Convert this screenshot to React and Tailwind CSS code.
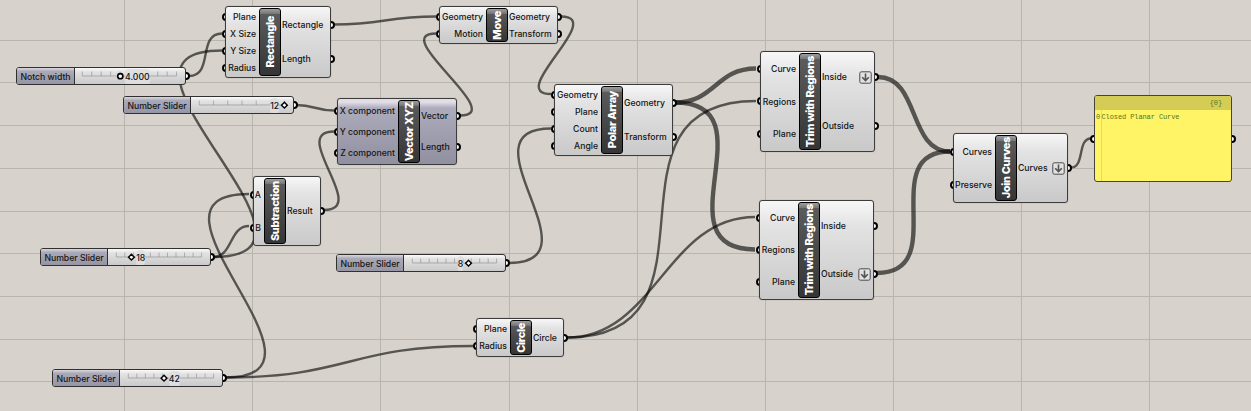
import React from "react";

const wires = [
  { from: [334, 24.5], to: [436, 16.5], d: 51 },
  { from: [460, 115.5], to: [436, 33.5], d: 49 },
  { from: [561, 16.5], to: [551, 94], d: 46 },
  { from: [296, 105], to: [334, 110.5], d: 19 },
  { from: [189, 76], to: [222, 33.5], d: 25 },
  { from: [213, 257], to: [222, 50.5], d: 144 },
  { from: [213, 257], to: [249, 226], d: 20 },
  { from: [225, 377.5], to: [249, 194], d: 128 },
  { from: [225, 377.5], to: [473, 346], d: 124 },
  { from: [509, 263], to: [551, 128.5], d: 93 },
  { from: [324, 210], to: [334, 131.5], d: 46 },
  { from: [567, 337.5], to: [756, 101], d: 169 },
  { from: [567, 337.5], to: [755, 217], d: 88 },
  { from: [675, 102.5], to: [756, 68.5], d: 40, thick: true },
  { from: [675, 102.5], to: [755, 249.5], d: 98, thick: true },
  { from: [878, 77], to: [950, 151.5], d: 42, thick: true },
  { from: [877, 273], to: [950, 151.5], d: 75, thick: true },
  { from: [1071, 167.5], to: [1091, 138.5], d: 14 },
];

const nodes = [
  { title: "Rectangle", x: 225, y: 6, w: 106, h: 72, left: 34, inputs: ["Plane", "X Size", "Y Size", "Radius"], outputs: ["Rectangle", "Length"] },
  { title: "Move", x: 439, y: 6, w: 119, h: 38, left: 47, inputs: ["Geometry", "Motion"], outputs: ["Geometry", "Transform"] },
  { title: "Vector XYZ", x: 337, y: 98, w: 120, h: 67, left: 61, inputs: ["X component", "Y component", "Z component"], outputs: ["Vector", "Length"], purple: true },
  { title: "Polar Array", x: 554, y: 84, w: 119, h: 72, left: 47, inputs: ["Geometry", "Plane", "Count", "Angle"], outputs: ["Geometry", "Transform"] },
  { title: "Trim with Regions", x: 760, y: 51, w: 115, h: 101, left: 39, inputs: ["Curve", "Regions", "Plane"], outputs: ["Inside", "Outside"], flatten: 0 },
  { title: "Trim with Regions", x: 759, y: 200, w: 115, h: 100, left: 39, inputs: ["Curve", "Regions", "Plane"], outputs: ["Inside", "Outside"], flatten: 1 },
  { title: "Join Curves", x: 953, y: 133, w: 115, h: 70, left: 42, inputs: ["Curves", "Preserve"], outputs: ["Curves"], flatten: 0 },
  { title: "Subtraction", x: 253, y: 176, w: 68, h: 70, left: 11, inputs: ["A", "B"], outputs: ["Result"] },
  { title: "Circle", x: 476, y: 318, w: 88, h: 39, left: 34, inputs: ["Plane", "Radius"], outputs: ["Circle"] },
];

const sliders = [
  { label: "Notch width", value: "4.000", x: 16, y: 67, w: 170, labelW: 59, knob: 45.3, round: true, ticks: 11 },
  { label: "Number Slider", value: "12", x: 123, y: 96, w: 171, labelW: 68, knob: 93.4, before: true, ticks: 7 },
  { label: "Number Slider", value: "18", x: 40, y: 248, w: 171, labelW: 68, knob: 23.4, ticks: 11 },
  { label: "Number Slider", value: "8", x: 336, y: 254, w: 170, labelW: 68, knob: 64.5, before: true, ticks: 11 },
  { label: "Number Slider", value: "42", x: 52, y: 369, w: 171, labelW: 68, knob: 44, ticks: 11 },
];

const gridX = [124, 252, 380, 509, 637, 765, 893, 1021, 1149];
const gridY = [40, 82, 125, 168, 211, 253, 296, 339, 381];

function Port({ side }) {
  return (
    <span
      className={
        "absolute top-1/2 -z-10 -mt-1 size-2 rounded-full border-2 border-black bg-white " +
        (side === "in" ? "-left-[3.5px]" : "-right-[4px]")
      }
    />
  );
}

function FlattenMark() {
  return (
    <svg className="size-[13px] shrink-0" viewBox="0 0 13 13" fill="none">
      <rect x="0.8" y="0.8" width="11.4" height="11.4" rx="1.5" fill="#e2e2e2" stroke="#4b4b4b" strokeWidth="1" />
      <path d="M6.5 2.6V9.4M3.2 6.2L6.5 9.6L9.8 6.2" stroke="#555" strokeWidth="1.6" />
    </svg>
  );
}

function Node({ node }) {
  return (
    <section className="absolute isolate" style={{ left: node.x, top: node.y, width: node.w, height: node.h }}>
      <div
        className={
          "absolute inset-0 -z-5 rounded-[3px] border border-[#3c3c3c] bg-linear-to-b shadow-[0_0_1px_rgba(0,0,0,.4)] " +
          (node.purple
            ? "from-[#e3dde6] from-5% via-[#adacbc] via-14% to-[#9190a0]"
            : "from-[#f7f7f7] via-[#e3e3e3] via-25% to-[#c9c9c9]")
        }
      />
      <div className="flex h-full py-[2px]">
        <div className="flex shrink-0 flex-col" style={{ width: node.left }}>
          {node.inputs.map((name) => (
            <div key={name} className="relative flex flex-1 items-center justify-end pt-px pr-[3px]">
              <Port side="in" />
              <span>{name}</span>
            </div>
          ))}
        </div>
        <div className="relative flex w-[22px] shrink-0 items-center justify-center overflow-hidden rounded-[3px] border border-black bg-linear-to-b from-[#5e5e5e] to-[#353535]">
          <span className="rotate-180 text-[11px] leading-none font-extrabold tracking-[-0.36px] text-white [writing-mode:vertical-rl]">
            {node.title}
          </span>
          <span className="absolute inset-x-0 top-0 h-[5px] bg-linear-to-b from-white/40 to-white/15" />
        </div>
        <div className="flex min-w-0 flex-1 flex-col">
          {node.outputs.map((name, i) => (
            <div key={name} className="relative flex flex-1 items-center justify-between pt-px pr-[3px] pl-px">
              <Port side="out" />
              <span>{name}</span>
              {node.flatten === i && <FlattenMark />}
            </div>
          ))}
        </div>
      </div>
    </section>
  );
}

function Slider({ s }) {
  const track = s.w - s.labelW;
  const start = s.round ? 7.3 : 8.3;
  const end = track - 9.4;
  const tick = Array.from({ length: s.ticks }, (_, i) => start + ((end - start) * i) / (s.ticks - 1));
  return (
    <section className="absolute isolate" style={{ left: s.x, top: s.y, width: s.w, height: 18 }}>
      <span className="absolute top-[5px] -right-[4px] -z-10 size-2 rounded-full border-2 border-black bg-white" />
      <div className="flex h-full overflow-hidden rounded-[3px] border border-[#303030] bg-linear-to-b from-[#fafafa] via-[#e2e2e2] via-25% to-[#cacaca]">
        <div
          className="flex shrink-0 items-center justify-center border-r border-[#303030] bg-linear-to-b from-[#d9d7df] via-[#aaa9b8] via-22% to-[#9695a5] pt-[2px]"
          style={{ width: s.labelW - 1 }}
        >
          {s.label}
        </div>
        <div className="relative flex-1">
          <svg className="block h-full w-full" fill="none">
            <path
              d={`M${start} 8H${end}` + tick.map((t) => `M${t.toFixed(1)} 3.5V8`).join("")}
              stroke="#8c8c8c"
              strokeOpacity="0.75"
              strokeWidth="0.8"
            />
          </svg>
          <span
            className="absolute top-[1px] rounded-sm bg-[#dfdfdf]/90 leading-4"
            style={s.before ? { right: track - s.knob + 4.2 } : { left: s.knob + 4.8 }}
          >
            {s.value}
          </span>
          <svg className="absolute inset-0 h-full w-full" fill="none">
            {s.round ? (
              <circle cx={s.knob} cy="8.2" r="2.6" fill="white" stroke="black" strokeWidth="1.6" />
            ) : (
              <path d={`M${s.knob} 5.3L${s.knob + 2.9} 8.2L${s.knob} 11.1L${s.knob - 2.9} 8.2Z`} fill="white" stroke="black" strokeWidth="1.4" />
            )}
          </svg>
        </div>
      </div>
    </section>
  );
}

function Panel() {
  return (
    <section className="absolute top-[95px] left-[1094px] isolate h-[87px] w-[138px] font-['Liberation_Mono',monospace] text-[7px] font-normal tracking-[-0.1px] text-[#56761b]">
      <span className="absolute top-[39.5px] -left-[4px] -z-10 size-2 rounded-full border-2 border-black bg-white" />
      <span className="absolute top-[39.5px] -right-[4px] -z-10 size-2 rounded-full border-2 border-black bg-white" />
      <div className="flex h-full flex-col overflow-hidden rounded-[3px] border border-[#44443a] bg-[#fff466]">
        <header className="flex h-[14px] items-center justify-end bg-[#d5cc55] pr-[9px]">{"{0}"}</header>
        <div className="flex flex-1 leading-[15px]">
          <span className="w-[6.5px] border-r border-[#e6dc59] pl-px">0</span>
          <span className="whitespace-nowrap">Closed Planar Curve</span>
        </div>
      </div>
    </section>
  );
}

export default function App() {
  return (
    <main className="relative h-[411px] w-[1251px] overflow-hidden bg-[#d7d2cb] font-['Inter',sans-serif] text-[8.7px] leading-none font-medium tracking-[-0.02px] whitespace-nowrap text-[#151515]">
      <svg className="absolute inset-0" width="1251" height="411" fill="none">
        <path
          d={gridX.map((x) => `M${x + 0.5} 0V411`).join("") + gridY.map((y) => `M0 ${y + 0.5}H1251`).join("")}
          stroke="#b8b5ae"
        />
        {wires.map(({ from: [x1, y1], to: [x2, y2], d, thick }, i) => (
          <path
            key={i}
            d={`M${x1} ${y1}C${x1 + d} ${y1} ${x2 - d} ${y2} ${x2} ${y2}`}
            stroke="black"
            strokeOpacity="0.6"
            strokeWidth={thick ? 4.4 : 2.4}
          />
        ))}
      </svg>
      {nodes.map((node, i) => (
        <Node key={i} node={node} />
      ))}
      {sliders.map((s, i) => (
        <Slider key={i} s={s} />
      ))}
      <Panel />
    </main>
  );
}
